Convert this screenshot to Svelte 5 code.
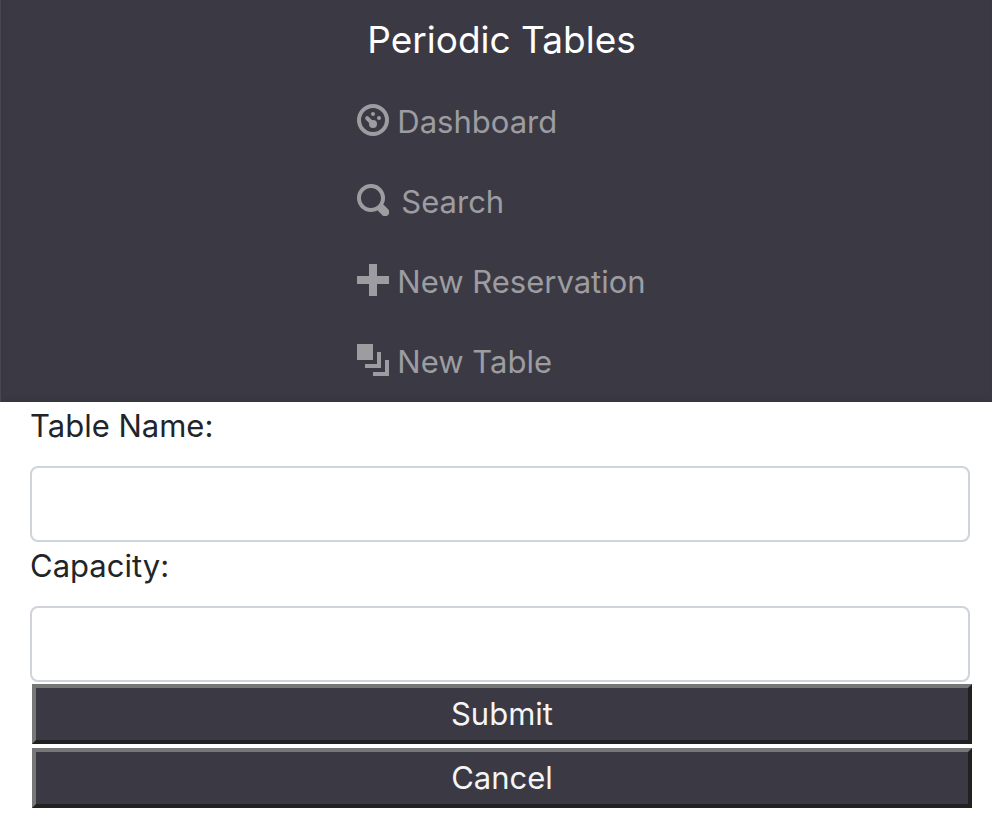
<script>
  const links = [
    {
      label: 'Dashboard',
      path: 'M0 4a4 4 0 1 1 8 0a4 4 0 1 1-8 0zM1 4a3 3 0 1 0 6 0a3 3 0 1 0-6 0zM3.5 2.5a.5.5 0 1 1 1 0a.5.5 0 1 1-1 0zM5 3.5a.5.5 0 1 1 1 0a.5.5 0 1 1-1 0zM2.85 3.15L4.35 4.65L3.65 5.35L2.15 3.85a.5.5 0 0 1 .7-.7zM3 5a1 1 0 1 1 2 0a1 1 0 1 1-2 0z'
    },
    {
      label: 'Search',
      spaced: true,
      path: 'M3.5 0c-1.93 0-3.5 1.57-3.5 3.5s1.57 3.5 3.5 3.5c.59 0 1.17-.14 1.66-.41a1 1 0 0 0 .13.13l1 1a1.02 1.02 0 1 0 1.44-1.44l-1-1a1 1 0 0 0-.16-.13c.27-.49.44-1.06.44-1.66 0-1.93-1.55-3.5-3.5-3.5zm0 1c1.39 0 2.5 1.11 2.5 2.5 0 .66-.24 1.27-.66 1.72l-.03.03a1 1 0 0 0-.13.13c-.44.4-1.04.63-1.69.63-1.39 0-2.5-1.11-2.5-2.5s1.11-2.5 2.5-2.5z'
    },
    { label: 'New Reservation', path: 'M3 0v3h-3v2h3v3h2v-3h3v-2h-3v-3h-2z' },
    {
      label: 'New Table',
      path: 'M0 0v4h4v-4h-4zm5 2v3h-3v1h4v-4h-1zm2 2v3h-3v1h4v-4h-1z'
    }
  ];

  let tableName = $state('');
  let capacity = $state('');

  function cancel() {
    tableName = '';
    capacity = '';
  }
</script>

<div class="page">
  <header>
    <a class="brand" href="#home">Periodic Tables</a>
    <nav>
      {#each links as link}
        <a href="#{link.label}" class:spaced={link.spaced}>
          <svg viewBox="0 0 8 8" aria-hidden="true"><path d={link.path} /></svg>
          <span>{link.label}</span>
        </a>
      {/each}
    </nav>
  </header>

  <form onsubmit={(e) => e.preventDefault()}>
    <label for="table_name">Table Name:</label>
    <input id="table_name" type="text" bind:value={tableName} />
    <label for="capacity">Capacity:</label>
    <input id="capacity" type="text" bind:value={capacity} />
    <div class="actions">
      <button type="submit">Submit</button>
      <button type="button" onclick={cancel}>Cancel</button>
    </div>
  </form>
</div>

<style>
  :global(body) {
    margin: 0;
    background: #fff;
  }

  .page {
    font-family: Inter, 'Liberation Sans', sans-serif;
    font-size: 31px;
    line-height: 48px;
    color: #212529;
  }

  header {
    display: flex;
    flex-direction: column;
    align-items: center;
    box-sizing: border-box;
    padding: 16px 0 0 10px;
    background: #3b3a44;
    border-left: 1px solid #484751;
    box-shadow: inset 0 -4px 4px -2px #36353e;
  }

  .brand {
    font-size: 37px;
    color: #fff;
    text-decoration: none;
  }

  nav {
    display: flex;
    flex-direction: column;
    padding-top: 18px;
  }

  nav a {
    display: flex;
    align-items: center;
    gap: 8px;
    height: 80px;
    color: #9d9da1;
    text-decoration: none;
  }

  nav a.spaced {
    gap: 12px;
  }

  nav svg {
    width: 32px;
    height: 32px;
    margin-bottom: 4px;
    fill: currentColor;
  }

  form {
    display: flex;
    flex-direction: column;
    padding: 0 22px 24px 30px;
  }

  input {
    box-sizing: border-box;
    width: 100%;
    height: 76px;
    margin-top: 16px;
    padding: 12px 24px;
    font: inherit;
    color: #495057;
    background: #fff;
    border: 2px solid #ced4da;
    border-radius: 8px;
  }

  .actions {
    display: flex;
    flex-direction: column;
    gap: 4px;
    margin: 2px -2px 0 2px;
  }

  button {
    box-sizing: border-box;
    height: 60px;
    padding: 0;
    font: inherit;
    color: #f5f5f5;
    background: #3b3a44;
    border: 4px solid;
    border-color: #767776 #212121 #212121 #767776;
  }
</style>
